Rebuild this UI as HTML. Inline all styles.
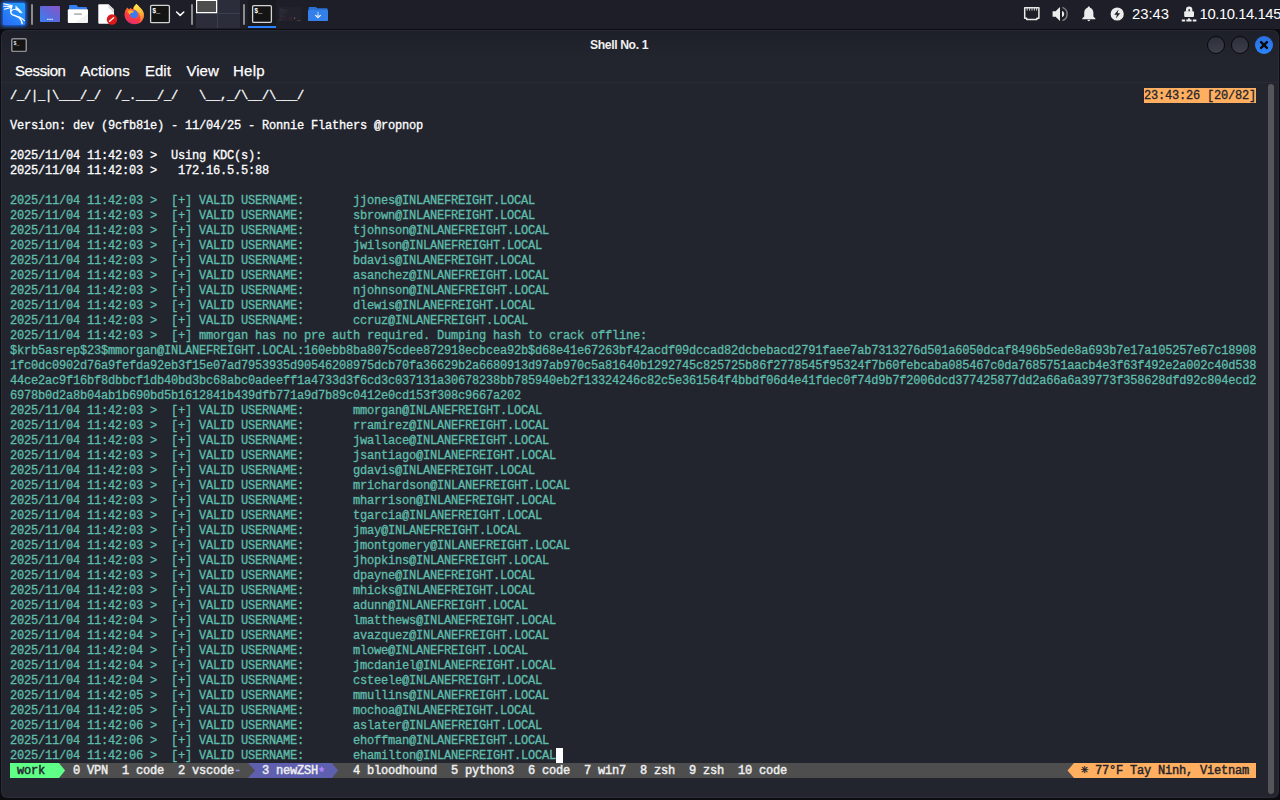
<!DOCTYPE html>
<html lang="en">
<head>
<meta charset="utf-8">
<title>Shell No. 1</title>
<style>
html,body{margin:0;padding:0;}
body{width:1280px;height:800px;overflow:hidden;background:#0b0c10;position:relative;font-family:"Liberation Sans",sans-serif;}
#panel{position:absolute;left:0;top:0;width:1280px;height:29px;background:#1d1e27;border-bottom:1px solid #0c0d11;}
#win{position:absolute;left:1px;top:30px;width:1278px;height:768px;background:#23252e;border-radius:7px 7px 6px 6px;overflow:hidden;}
#win:after{content:"";position:absolute;left:0;top:0;right:0;bottom:0;border-radius:7px 7px 6px 6px;box-shadow:inset 0 0 0 1px rgba(60,63,78,0.3);pointer-events:none;}
#titlebar{position:absolute;left:0;top:0;width:100%;height:28px;background:linear-gradient(#1e2029,#23252e);}
#title{position:absolute;left:0;top:1px;width:1236px;text-align:center;line-height:28px;font-size:12.2px;letter-spacing:-0.38px;font-weight:bold;color:#f0f0f0;}
#menubar{position:absolute;left:0;top:28px;width:100%;height:24px;background:#23252e;border-bottom:1px solid #292b34;}
#menubar span{position:absolute;top:0;line-height:25px;font-size:15px;color:#fff;-webkit-text-stroke:0.25px #fff;}
#term{position:absolute;left:9px;top:58px;width:1260px;font-family:"Liberation Mono",monospace;font-weight:normal;-webkit-text-stroke:0.3px;font-size:12px;letter-spacing:-0.2px;line-height:17px;}
.r{height:15px;white-space:pre;position:relative;}
.w{color:#fff;}
.g{color:#5ebdab;}
.tag{position:absolute;left:1134px;top:0;width:112px;height:15px;background:#ffaf5f;color:#23252e;}
.cur{display:inline-block;width:7px;height:15px;background:#fff;vertical-align:top;}
#status{position:absolute;left:9px;top:733px;width:1246px;height:15px;background:#4e4e4e;font-family:"Liberation Mono",monospace;font-weight:normal;-webkit-text-stroke:0.45px;font-size:12px;letter-spacing:-0.2px;line-height:17px;color:#eee;white-space:pre;}
#status span{position:absolute;top:0;height:15px;}
.wb{position:absolute;top:6px;width:16px;height:16px;border-radius:50%;border:1px solid #07080a;background:linear-gradient(#2d2f3a,#3c3f4b);}
.wb.close{border-color:transparent;background:linear-gradient(#2a6fe2,#2d85fd);background-clip:border-box;background-origin:border-box;}
.wb svg{position:absolute;left:-1px;top:-1px;}
#scroll{position:absolute;left:1267px;top:54px;width:6px;height:710px;border-radius:3px;background:#55565b;}
</style>
</head>
<body>
<div id="panel">
<svg width="1280" height="29" viewBox="0 0 1280 29" style="position:absolute;left:0;top:0;overflow:visible">
<defs>
<linearGradient id="kg" x1="1" y1="0" x2="0" y2="1"><stop offset="0" stop-color="#23a2ff"/><stop offset="1" stop-color="#2b69f4"/></linearGradient>
<linearGradient id="dg" x1="0" y1="1" x2="1" y2="0"><stop offset="0" stop-color="#3781f3"/><stop offset="0.55" stop-color="#6265d8"/><stop offset="1" stop-color="#8c54c8"/></linearGradient>
<linearGradient id="fg1" x1="0.7" y1="0.05" x2="0.35" y2="1"><stop offset="0" stop-color="#ffb030"/><stop offset="0.3" stop-color="#ff7a28"/><stop offset="0.6" stop-color="#ff3c38"/><stop offset="0.85" stop-color="#f23358"/><stop offset="1" stop-color="#d62d7c"/></linearGradient>
<linearGradient id="fg2" x1="0.3" y1="0" x2="0.6" y2="1"><stop offset="0" stop-color="#ffe850"/><stop offset="0.45" stop-color="#ffc23a"/><stop offset="0.8" stop-color="#ff8a34"/><stop offset="1" stop-color="#f8503c"/></linearGradient>
<linearGradient id="fd" x1="0" y1="0" x2="1" y2="1"><stop offset="0.66" stop-color="#ffffff"/><stop offset="0.67" stop-color="#f3f3f3"/></linearGradient>
<filter id="glow" x="-40%" y="-40%" width="180%" height="180%"><feGaussianBlur stdDeviation="1.6"/></filter>
</defs>
<!-- kali menu -->
<rect x="1.5" y="1.5" width="25" height="25" rx="3" fill="#1b66ea" filter="url(#glow)"/>
<rect x="3" y="3" width="22" height="22" rx="1.5" fill="url(#kg)"/>
<g transform="translate(3,3)" fill="none" stroke="#fff" stroke-linecap="round" stroke-linejoin="round">
<path d="M0.6 0.8L8.6 2.6M0.8 3.2L8.6 3.5M1.3 6.2L8.2 4.4" stroke-width="1.1"/>
<path d="M9 2.6C8.2 5 7.4 7.4 7.8 9.6C8.2 11.6 10.4 12.4 13.4 13.2C16 14 17.6 15.6 18.4 17.8L19.2 20.6" stroke-width="1.45"/>
<path d="M16 13.8C18 14.6 19.8 15.8 21.4 17.6" stroke-width="1.1"/>
<path d="M8.3 7.8C9.4 6.6 11.2 6.1 13.4 6.3" stroke-width="1.1"/>
<path d="M13 3.2L15.2 5.2C16.8 6.6 18.2 8.2 19.2 10L16.6 9.4C15.6 8.2 14.4 7.2 13.2 6.8Z" fill="#fff" stroke-width="0.6"/>
</g>
<!-- separators -->
<rect x="31" y="4" width="2" height="21" rx="1" fill="#8c8c8c"/>
<rect x="191" y="4" width="2" height="21" rx="1" fill="#8c8c8c"/>
<rect x="243" y="4" width="2" height="21" rx="1" fill="#8c8c8c"/>
<!-- show desktop -->
<rect x="40" y="6" width="20" height="16" rx="0.8" fill="url(#dg)"/>
<path d="M47 19.3H53" stroke="#e8e8f4" stroke-opacity="0.85" stroke-width="1.3" stroke-dasharray="1.3 0.3"/>
<!-- file manager -->
<path d="M69 9.5V6.2Q69 5 70.2 5H76Q76.8 5 77.3 5.8L78 7H86Q87 7 87 8V9.5Z" fill="#3380ee"/>
<rect x="67.8" y="9.2" width="20.2" height="13.8" rx="1" fill="url(#fd)"/>
<rect x="74" y="13.3" width="8" height="1.7" rx="0.85" fill="#b5b5b5"/>
<!-- text editor -->
<path d="M99.2 4.3H108.5L114 9.6V22.8Q114 23.7 113 23.7H99.2Q98.3 23.7 98.3 22.8V5.2Q98.3 4.3 99.2 4.3Z" fill="#fff"/>
<path d="M108.5 4.3L114 9.6V13L108.5 7.4Z" fill="#d6d6d6"/>
<circle cx="112" cy="19.5" r="5.2" fill="#dd1a1a"/>
<path d="M109.6 21.2L113.6 17.7" stroke="#fff" stroke-width="1.3" stroke-linecap="round"/>
<!-- firefox -->
<path d="M136.5 3.9C138.5 6 141 8 142.5 10.5C144.5 13.5 144.3 18 141.8 21C139 24.2 134 25.2 130 23.2C125.5 21 123.5 16 125 11.5C125.4 10 126.2 8.6 127.5 7.4C128 8.4 128.6 9 129.4 9.2L130.5 7.8C131 8.8 131.8 9.4 133 9.2C133 7.2 134.6 5.4 136.5 3.9Z" fill="url(#fg1)"/>
<path d="M136.5 3.9C138.5 6 141 8 142.5 10.5C144.5 13.5 144.3 18 141.8 21C140.8 22.2 139.8 23 138.6 23.6C141 20.6 141 16 139 13C137.6 11 135 10.4 134 9C133.4 7.4 134.8 5.2 136.5 3.9Z" fill="url(#fg2)"/>
<circle cx="134" cy="14.4" r="3.8" fill="#3a7af5"/>
<path d="M131.4 11.4C132.6 10.4 134.6 10.2 136.2 10.8C135 11 134 11.4 133.4 12Z" fill="#6a5ce0"/>
<path d="M127.2 11.2C128.2 10.4 129.6 10.2 130.8 10.6C132 10.6 133.2 11 134 11.8C133.4 12.6 132.2 12.6 131.2 13C130.4 13.4 130 14 129.4 14.4C128.8 13.2 127.8 12.4 127.2 11.2Z" fill="#ffb22c"/>
<!-- terminal launcher -->
<rect x="150.6" y="5.4" width="18.8" height="17.2" rx="1.2" fill="#141414" stroke="#d4d4d4" stroke-width="1.3"/>
<text x="152.2" y="13" font-family="Liberation Mono, monospace" font-weight="bold" font-size="6.6" fill="#fff">$_</text>
<path d="M176.6 12L180.2 15.4L183.8 12" fill="none" stroke="#fff" stroke-width="1.5" stroke-linecap="round" stroke-linejoin="round"/>
<!-- workspace switcher -->
<rect x="196" y="0" width="44" height="28" fill="#2b2d3a"/>
<rect x="217" y="0" width="1" height="28" fill="#3b3e4c"/>
<rect x="196" y="13" width="44" height="1" fill="#3b3e4c"/>
<rect x="196.6" y="0.4" width="20" height="12.2" fill="#4d4d4d" stroke="#fff" stroke-width="1.2"/>
<!-- active task -->
<rect x="248" y="0" width="28" height="29" fill="#191a20"/>
<rect x="248" y="26" width="28" height="2" fill="#2a80ff"/>
<rect x="252.6" y="5.6" width="18.8" height="16.8" rx="1.2" fill="#141414" stroke="#d4d4d4" stroke-width="1.3"/>
<text x="254.2" y="13" font-family="Liberation Mono, monospace" font-weight="bold" font-size="6.6" fill="#fff">$_</text>
<!-- thumbnail -->
<rect x="279" y="7" width="22" height="14" fill="#21222b"/>
<path d="M279.6 8.2h2.4M279.6 9.4h5M279.6 10.6h9M279.6 11.8h5.4M279.6 13h7.6M279.6 14.2h3" stroke="#2f323e" stroke-width="0.7"/>
<path d="M279.6 15.4h4M279.6 16.4h6" stroke="#263246" stroke-width="0.7"/>
<path d="M279.6 17.8h2.6M284 17.8h1.6M289.4 17.8h3.4M280 19.4h3M289.6 19.4h2.6" stroke="#4a222c" stroke-width="0.9"/>
<rect x="294" y="17.6" width="1.2" height="1.2" fill="#6c7080"/>
<path d="M297.2 20.5h3.4" stroke="#5c4828" stroke-width="0.7"/>
<path d="M279.4 20.5h0.9" stroke="#2c6a48" stroke-width="0.7"/>
<!-- downloads folder -->
<path d="M308.6 21V8Q308.6 7 309.6 7H315.4Q316.2 7 316.6 7.6L317 8.2H326.6Q327.6 8.2 327.6 9.2V21Z" fill="#2b71d6"/>
<rect x="308" y="10" width="20" height="11" rx="0.8" fill="#3380ea"/>
<path d="M318 12.2V16.4" fill="none" stroke="#dfe9fb" stroke-width="1.3" stroke-dasharray="1.1 0.35"/>
<path d="M315.6 15.3L318 17.7L320.4 15.3" fill="none" stroke="#fff" stroke-width="1.15" stroke-linecap="round" stroke-linejoin="round"/>
<!-- ethernet -->
<path d="M1024.7 7.8H1038.9V18.2H1036.9V19.5H1026.7V18.2H1024.7Z" fill="none" stroke="#e9e9e9" stroke-width="1.5" stroke-linejoin="round"/>
<path d="M1027.2 8v2.6M1029.6 8v2.6M1032 8v2.6M1034.4 8v2.6M1036.6 8v2.6" stroke="#d2d2d2" stroke-width="1"/>
<!-- volume -->
<path d="M1052.6 11.2H1055.6L1060 7V21L1055.6 16.8H1052.6Z" fill="#ececec"/>
<path d="M1062 10.8A3.4 3.4 0 0 1 1062 17.2Z" fill="#ececec"/>
<path d="M1062.4 7.4A7 7 0 0 1 1062.4 20.6" fill="none" stroke="#7c7c7c" stroke-width="1.5"/>
<!-- bell -->
<path d="M1088.8 6.6C1089.6 6.6 1090 7.2 1090 7.8C1092.4 8.6 1093.4 10.6 1093.4 13V16.4L1095.4 18.6V19.2H1082.2V18.6L1084.2 16.4V13C1084.2 10.6 1085.2 8.6 1087.6 7.8C1087.6 7.2 1088 6.6 1088.8 6.6Z" fill="#ececec"/>
<path d="M1087.4 19.8H1090.2A1.4 1.4 0 0 1 1087.4 19.8Z" fill="#ececec"/>
<!-- power -->
<circle cx="1117.2" cy="14" r="6.6" fill="#ececec"/>
<path d="M1118.6 9.4L1114.2 14.7H1116.9L1115.9 18.6L1120.2 13.3H1117.5Z" fill="#1d1e27"/>
<text x="1132" y="18.8" font-family="Liberation Sans, sans-serif" font-size="14.8" fill="#fff">23:43</text>
<!-- vpn lock -->
<path d="M1187.2 11.8V9.6A1.95 1.95 0 0 1 1191.1 9.6V11.8" fill="none" stroke="#ececec" stroke-width="2.5"/>
<rect x="1184.2" y="11.3" width="9.8" height="5.7" rx="0.9" fill="#ececec"/>
<path d="M1181.8 20.45H1185.1M1186.3 20.45H1191.6M1192.8 20.45H1196.4" stroke="#ececec" stroke-width="2"/>
<rect x="1187.9" y="18.3" width="2.2" height="1.6" rx="0.6" fill="#ececec"/>
<text x="1199.6" y="18.8" font-family="Liberation Sans, sans-serif" font-size="14.8" letter-spacing="-0.42" fill="#fff">10.10.14.145</text>
</svg>

</div>
<div id="win">
  <div id="titlebar">
    <div id="title">Shell No. 1</div>
    <svg style="position:absolute;left:10px;top:8px" width="16" height="14" viewBox="0 0 16 14"><rect x="0.75" y="0.75" width="14.5" height="12.7" rx="1.4" fill="#141414" stroke="#8c8d92" stroke-width="1.5"/><text x="2.6" y="6.8" font-family="Liberation Mono, monospace" font-size="5" font-weight="bold" fill="#e8e8e8">$_</text></svg>
    <div class="wb" style="left:1206px"></div><div class="wb" style="left:1230px"></div>
    <div class="wb close" style="left:1254px"><svg width="18" height="18" viewBox="0 0 18 18"><path d="M6.1 6.1L11.9 11.9M11.9 6.1L6.1 11.9" stroke="#0b0b0f" stroke-width="2.5" stroke-linecap="round"/></svg></div>

  </div>
  <div id="menubar"><span style="left:14px;letter-spacing:-0.4px">Session</span><span style="left:79.5px">Actions</span><span style="left:144px">Edit</span><span style="left:185.5px">View</span><span style="left:232px;letter-spacing:0.25px">Help</span></div>
  <div id="term">
<div class="r w">/_/|_|\___/_/  /_.___/_/   \__,_/\__/\___/<span class="tag">23:43:26 [20/82]</span></div>
<div class="r"></div>
<div class="r w">Version: dev (9cfb81e) - 11/04/25 - Ronnie Flathers @ropnop</div>
<div class="r"></div>
<div class="r w">2025/11/04 11:42:03 &gt;  Using KDC(s):</div>
<div class="r w">2025/11/04 11:42:03 &gt;   172.16.5.5:88</div>
<div class="r"></div>
<div class="r g">2025/11/04 11:42:03 &gt;  [+] VALID USERNAME:       jjones@INLANEFREIGHT.LOCAL</div>
<div class="r g">2025/11/04 11:42:03 &gt;  [+] VALID USERNAME:       sbrown@INLANEFREIGHT.LOCAL</div>
<div class="r g">2025/11/04 11:42:03 &gt;  [+] VALID USERNAME:       tjohnson@INLANEFREIGHT.LOCAL</div>
<div class="r g">2025/11/04 11:42:03 &gt;  [+] VALID USERNAME:       jwilson@INLANEFREIGHT.LOCAL</div>
<div class="r g">2025/11/04 11:42:03 &gt;  [+] VALID USERNAME:       bdavis@INLANEFREIGHT.LOCAL</div>
<div class="r g">2025/11/04 11:42:03 &gt;  [+] VALID USERNAME:       asanchez@INLANEFREIGHT.LOCAL</div>
<div class="r g">2025/11/04 11:42:03 &gt;  [+] VALID USERNAME:       njohnson@INLANEFREIGHT.LOCAL</div>
<div class="r g">2025/11/04 11:42:03 &gt;  [+] VALID USERNAME:       dlewis@INLANEFREIGHT.LOCAL</div>
<div class="r g">2025/11/04 11:42:03 &gt;  [+] VALID USERNAME:       ccruz@INLANEFREIGHT.LOCAL</div>
<div class="r g">2025/11/04 11:42:03 &gt;  [+] mmorgan has no pre auth required. Dumping hash to crack offline:</div>
<div class="r g">$krb5asrep$23$mmorgan@INLANEFREIGHT.LOCAL:160ebb8ba8075cdee872918ecbcea92b$d68e41e67263bf42acdf09dccad82dcbebacd2791faee7ab7313276d501a6050dcaf8496b5ede8a693b7e17a105257e67c18908</div>
<div class="r g">1fc0dc0902d76a9fefda92eb3f15e07ad7953935d90546208975dcb70fa36629b2a6680913d97ab970c5a81640b1292745c825725b86f2778545f95324f7b60febcaba085467c0da7685751aacb4e3f63f492e2a002c40d538</div>
<div class="r g">44ce2ac9f16bf8dbbcf1db40bd3bc68abc0adeeff1a4733d3f6cd3c037131a30678238bb785940eb2f13324246c82c5e361564f4bbdf06d4e41fdec0f74d9b7f2006dcd377425877dd2a66a6a39773f358628dfd92c804ecd2</div>
<div class="r g">6978b0d2a8b04ab1b690bd5b1612841b439dfb771a9d7b89c0412e0cd153f308c9667a202</div>
<div class="r g">2025/11/04 11:42:03 &gt;  [+] VALID USERNAME:       mmorgan@INLANEFREIGHT.LOCAL</div>
<div class="r g">2025/11/04 11:42:03 &gt;  [+] VALID USERNAME:       rramirez@INLANEFREIGHT.LOCAL</div>
<div class="r g">2025/11/04 11:42:03 &gt;  [+] VALID USERNAME:       jwallace@INLANEFREIGHT.LOCAL</div>
<div class="r g">2025/11/04 11:42:03 &gt;  [+] VALID USERNAME:       jsantiago@INLANEFREIGHT.LOCAL</div>
<div class="r g">2025/11/04 11:42:03 &gt;  [+] VALID USERNAME:       gdavis@INLANEFREIGHT.LOCAL</div>
<div class="r g">2025/11/04 11:42:03 &gt;  [+] VALID USERNAME:       mrichardson@INLANEFREIGHT.LOCAL</div>
<div class="r g">2025/11/04 11:42:03 &gt;  [+] VALID USERNAME:       mharrison@INLANEFREIGHT.LOCAL</div>
<div class="r g">2025/11/04 11:42:03 &gt;  [+] VALID USERNAME:       tgarcia@INLANEFREIGHT.LOCAL</div>
<div class="r g">2025/11/04 11:42:03 &gt;  [+] VALID USERNAME:       jmay@INLANEFREIGHT.LOCAL</div>
<div class="r g">2025/11/04 11:42:03 &gt;  [+] VALID USERNAME:       jmontgomery@INLANEFREIGHT.LOCAL</div>
<div class="r g">2025/11/04 11:42:03 &gt;  [+] VALID USERNAME:       jhopkins@INLANEFREIGHT.LOCAL</div>
<div class="r g">2025/11/04 11:42:03 &gt;  [+] VALID USERNAME:       dpayne@INLANEFREIGHT.LOCAL</div>
<div class="r g">2025/11/04 11:42:03 &gt;  [+] VALID USERNAME:       mhicks@INLANEFREIGHT.LOCAL</div>
<div class="r g">2025/11/04 11:42:03 &gt;  [+] VALID USERNAME:       adunn@INLANEFREIGHT.LOCAL</div>
<div class="r g">2025/11/04 11:42:04 &gt;  [+] VALID USERNAME:       lmatthews@INLANEFREIGHT.LOCAL</div>
<div class="r g">2025/11/04 11:42:04 &gt;  [+] VALID USERNAME:       avazquez@INLANEFREIGHT.LOCAL</div>
<div class="r g">2025/11/04 11:42:04 &gt;  [+] VALID USERNAME:       mlowe@INLANEFREIGHT.LOCAL</div>
<div class="r g">2025/11/04 11:42:04 &gt;  [+] VALID USERNAME:       jmcdaniel@INLANEFREIGHT.LOCAL</div>
<div class="r g">2025/11/04 11:42:04 &gt;  [+] VALID USERNAME:       csteele@INLANEFREIGHT.LOCAL</div>
<div class="r g">2025/11/04 11:42:05 &gt;  [+] VALID USERNAME:       mmullins@INLANEFREIGHT.LOCAL</div>
<div class="r g">2025/11/04 11:42:05 &gt;  [+] VALID USERNAME:       mochoa@INLANEFREIGHT.LOCAL</div>
<div class="r g">2025/11/04 11:42:06 &gt;  [+] VALID USERNAME:       aslater@INLANEFREIGHT.LOCAL</div>
<div class="r g">2025/11/04 11:42:06 &gt;  [+] VALID USERNAME:       ehoffman@INLANEFREIGHT.LOCAL</div>
<div class="r g">2025/11/04 11:42:06 &gt;  [+] VALID USERNAME:       ehamilton@INLANEFREIGHT.LOCAL<span class="cur"> </span></div>
  </div>
  <div id="status">
<span style="left:0;width:49px;background:#5fff87;color:#23252e"> work</span><svg style="position:absolute;left:49px;top:0" width="7" height="15"><path d="M0 0L6.1 7.5L0 15Z" fill="#5fff87"/></svg>
<span style="left:56px"> 0 VPN  1 code  2 vscode<b style="color:#8f8fe0;font-weight:normal">-</b></span>
<span style="left:238px;width:84px;background:#5f5faf"></span><svg style="position:absolute;left:238px;top:0" width="7" height="15"><path d="M0 0L7 7.5L0 15Z" fill="#4e4e4e"/></svg>
<span style="left:252px">3 newZSH<b style="color:#af87ff;font-weight:normal;position:relative;top:2px">*</b></span><svg style="position:absolute;left:322px;top:0" width="7" height="15"><path d="M0 0L6.1 7.5L0 15Z" fill="#5f5faf"/></svg>
<span style="left:343px">4 bloodhound  5 python3  6 code  7 win7  8 zsh  9 zsh  10 code</span>
<svg style="position:absolute;left:1057px;top:0" width="7" height="15"><path d="M7 0L0.5 7.5L7 15Z" fill="#ffaf5f"/></svg><span style="left:1064px;width:182px;background:#ffaf5f;color:#23252e"> ☀ 77°F Tay Ninh, Vietnam</span>

  </div>
  <div id="scroll"></div>
</div>
</body>
</html>
